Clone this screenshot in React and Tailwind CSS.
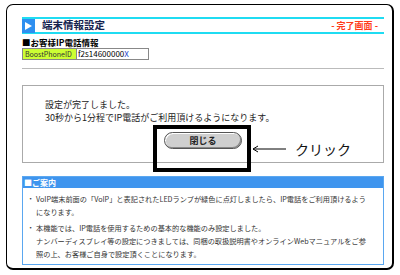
import React from "react";

export default function App() {
  const jp = { fontFamily: '"MS PGothic","Noto Sans CJK JP","Noto Sans",sans-serif' };
  return (
    <div className="w-[400px] h-[275px] bg-white overflow-hidden" style={jp}>
      <div className="ml-[6px] mt-[4px] w-[388px] h-[266px] border border-black border-r-2 border-b-2 rounded-[7px] pl-[15px] pr-[8px] pt-[12px]">
        {/* header */}
        <div className="h-[17px] border-y-2 border-[#1fdcf2] flex items-center">
          <div className="w-[13px] h-[14px] bg-[#2e8ff0] flex items-center justify-center">
            <svg width="7" height="8" viewBox="0 0 7 8"><polygon points="0,0 7,4 0,8" fill="#fff" /></svg>
          </div>
          <span className="ml-[7px] text-[10.5px] font-bold text-[#14224e] leading-none">端末情報設定</span>
          <span className="ml-auto mr-[6px] text-[9px] font-bold text-[#ff3b1a] leading-none">- 完了画面 -</span>
        </div>
        <div className="mt-[3px] text-[8.5px] font-bold text-black leading-[10px]">■お客様IP電話情報</div>
        <div className="mt-[1px] flex h-[12px]">
          <div className="w-[55px] h-full bg-[#ccff33] border border-[#888] text-[7px] text-[#333] flex items-center pl-[2px] leading-none">BoostPhoneID</div>
          <div className="w-[72px] h-full border border-[#888] border-l-0 text-[8px] text-black flex items-center pl-[1px] leading-none">f2s14600000<span className="text-[#2244cc]">X</span></div>
        </div>
        <div className="mt-[8px] h-px bg-[#bbbbbb]" />
        {/* message box */}
        <div className="relative mt-[16px] h-[78px] border border-[#aaaaaa] pl-[22px] pt-[12px]">
          <div className="text-[9px] leading-[13px] text-[#222]">設定が完了しました。</div>
          <div className="text-[9px] leading-[13px] text-[#222]">30秒から1分程でIP電話がご利用頂けるようになります。</div>
          <div className="mt-[8px] flex justify-center pr-[22px]">
            <div className="w-[78px] h-[17px] rounded-full border border-[#555] bg-[#cfcfcf] flex items-center justify-center text-[9px] font-bold text-[#222] shadow-[inset_-1px_-1px_0_#888,inset_1px_1px_0_#fff]">閉じる</div>
          </div>
          <div className="absolute left-[130px] top-[39px] w-[98px] h-[47px] border-4 border-black" />
          <div className="absolute left-[229px] top-[56px] flex items-center">
            <svg width="34" height="8" viewBox="0 0 34 8"><line x1="1" y1="4" x2="34" y2="4" stroke="#000" strokeWidth="1" /><polyline points="6,1 1,4 6,7" fill="none" stroke="#000" strokeWidth="1" /></svg>
            <span className="ml-[9px] text-[14px] text-[#111] leading-none">クリック</span>
          </div>
        </div>
        {/* guidance */}
        <div className="mt-[13px] border border-[#5aa7f0]">
          <div className="h-[11px] bg-[#3f95ee] text-white text-[8px] font-bold leading-[11px] pl-[1px]">■ご案内</div>
          <div className="px-[4px] pt-[5px] pb-[3px] text-[7.2px] text-[#333] whitespace-nowrap">
            <div className="flex">
              <span className="w-[9px] shrink-0">・</span>
              <div className="leading-[13px]">VoIP端末前面の「VoIP」と表記されたLEDランプが緑色に点灯しましたら、IP電話をご利用頂けるよう<br />になります。</div>
            </div>
            <div className="mt-[3px] flex">
              <span className="w-[9px] shrink-0">・</span>
              <div className="leading-[13px]">本機能では、IP電話を使用するための基本的な機能のみ設定しました。<br />ナンバーディスプレイ等の設定につきましては、同梱の取扱説明書やオンラインWebマニュアルをご参<br />照の上、お客様ご自身で設定頂くことになります。</div>
            </div>
          </div>
        </div>
      </div>
    </div>
  );
}
